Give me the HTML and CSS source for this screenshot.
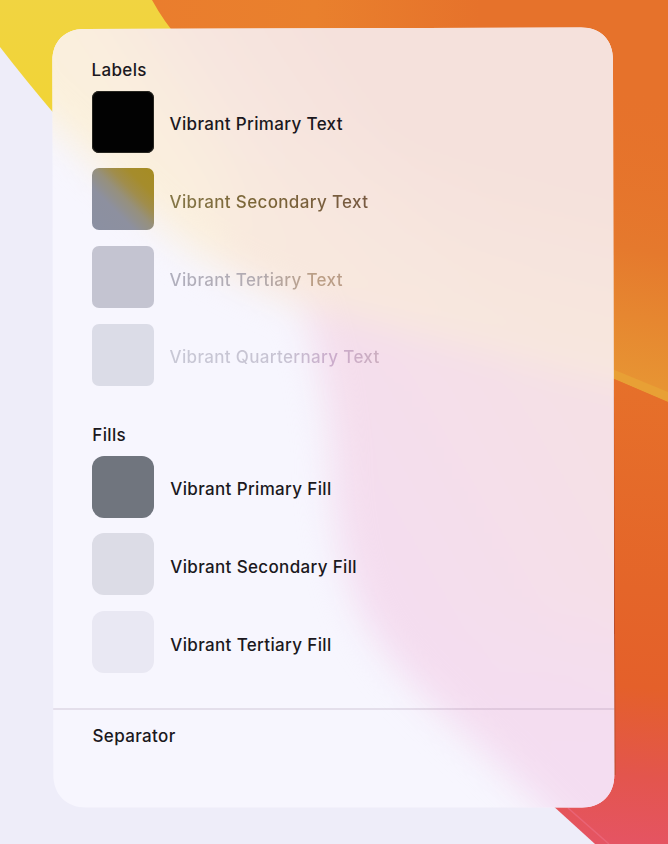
FILE: index.html
```html
<!DOCTYPE html>
<html lang="en">
<head>
<meta charset="utf-8">
<title>Vibrancy</title>
<link rel="stylesheet" href="styles.css">
</head>
<body>
<svg class="wallpaper" viewBox="0 0 668 844" aria-hidden="true">
  <defs>
    <linearGradient id="yellow" x1="0" y1="0" x2="0" y2="110" gradientUnits="userSpaceOnUse">
      <stop offset="0" stop-color="#f1d441"/><stop offset="1" stop-color="#f1d436"/>
    </linearGradient>
    <linearGradient id="orange" x1="150" y1="0" x2="480" y2="0" gradientUnits="userSpaceOnUse">
      <stop offset="0" stop-color="#ea7d2d"/><stop offset=".5" stop-color="#e9802d"/><stop offset="1" stop-color="#e6722b"/>
    </linearGradient>
    <linearGradient id="side" x1="668" y1="90" x2="615" y2="380" gradientUnits="userSpaceOnUse">
      <stop offset="0" stop-color="#e6722b" stop-opacity="0"/><stop offset=".55" stop-color="#e5792d"/><stop offset="1" stop-color="#e79433"/>
    </linearGradient>
    <linearGradient id="red" x1="650" y1="380" x2="610" y2="844" gradientUnits="userSpaceOnUse">
      <stop offset="0" stop-color="#e6702a"/><stop offset=".45" stop-color="#e46529"/><stop offset=".66" stop-color="#e4602a"/><stop offset=".85" stop-color="#e3554d"/><stop offset="1" stop-color="#e55463"/>
    </linearGradient>
  </defs>
  <rect width="668" height="844" fill="#eeedf9"/>
  <path d="M0 0H260V200H130Q50 112 0 47Z" fill="url(#yellow)"/>
  <path d="M152 0H668V420L400 300L180 40Q164 22 152 0Z" fill="url(#orange)"/>
  <path d="M600 40H668V402L600 372Z" fill="url(#side)"/>
  <path d="M600 364L668 392V402L600 373Z" fill="#e8a035"/>
  <path d="M600 373L668 402V844H595L540 794Z" fill="url(#red)"/>
  <path d="M568 808L609 844" stroke="#ea6476" stroke-width="1.5" fill="none"/>
  <path d="M613.4 390L615 775" stroke="#b84e2e" stroke-width="1.2" fill="none"/>
</svg>

<main class="panel">
  <svg class="glow" viewBox="52 27 563 781" preserveAspectRatio="none" aria-hidden="true">
    <defs>
      <filter id="soft" x="-20%" y="-20%" width="140%" height="140%" color-interpolation-filters="sRGB"><feGaussianBlur stdDeviation="17"/></filter>
      <linearGradient id="warm" x1="120" y1="230" x2="360" y2="70" gradientUnits="userSpaceOnUse">
        <stop offset="0" stop-color="#fbf1db"/><stop offset=".3" stop-color="#faeede"/><stop offset=".6" stop-color="#f7e6df"/><stop offset="1" stop-color="#f5e1dc"/>
      </linearGradient>
      <linearGradient id="warmEdge" x1="470" y1="150" x2="420" y2="340" gradientUnits="userSpaceOnUse">
        <stop offset="0" stop-color="#f8e8de" stop-opacity="0"/><stop offset="1" stop-color="#f8e8de"/>
      </linearGradient>
      <linearGradient id="lilac" x1="320" y1="620" x2="600" y2="460" gradientUnits="userSpaceOnUse">
        <stop offset="0" stop-color="#f4dcf2"/><stop offset="1" stop-color="#f5e0e6"/>
      </linearGradient>
      <linearGradient id="lilacFoot" x1="500" y1="600" x2="520" y2="760" gradientUnits="userSpaceOnUse">
        <stop offset="0" stop-color="#f4ddf1" stop-opacity="0"/><stop offset="1" stop-color="#f4ddf1"/>
      </linearGradient>
    </defs>
    <rect x="52" y="27" width="563" height="781" fill="#f7f6fe"/>
    <g filter="url(#soft)">
      <path d="M0 -20H700V420L310 308Q215 275 160 225Q95 165 20 95Z" fill="url(#warm)"/>
      <path d="M230 120H700V420L310 308L230 270Z" fill="url(#warmEdge)"/>
      <path d="M302 304L700 404V900H630Q540 800 455 725Q370 650 352 590Q332 530 332 455Q325 370 302 304Z" fill="url(#lilac)"/>
      <path d="M400 600H700V900H630Q540 800 455 725Q420 690 400 660Z" fill="url(#lilacFoot)"/>
    </g>
  </svg>

  <section class="group labels">
    <h2>Labels</h2>
    <ul>
      <li><i class="swatch label-1"></i><span class="name">Vibrant Primary Text</span></li>
      <li><i class="swatch label-2"></i><span class="name tint secondary">Vibrant Secondary Text</span></li>
      <li><i class="swatch label-3"></i><span class="name tint tertiary">Vibrant Tertiary Text</span></li>
      <li><i class="swatch label-4"></i><span class="name tint quarternary">Vibrant Quarternary Text</span></li>
    </ul>
  </section>

  <section class="group fills">
    <h2>Fills</h2>
    <ul>
      <li><i class="swatch fill-1"></i><span class="name">Vibrant Primary Fill</span></li>
      <li><i class="swatch fill-2"></i><span class="name">Vibrant Secondary Fill</span></li>
      <li><i class="swatch fill-3"></i><span class="name">Vibrant Tertiary Fill</span></li>
    </ul>
  </section>

  <hr>
  <section class="group footer"><h2>Separator</h2></section>
</main>
</body>
</html>
```
FILE: styles.css
```css
* { box-sizing: border-box; }

body {
  margin: 0;
  height: 844px;
  overflow: hidden;
  padding: 27px 53px 36px 52px;
  font-family: Inter, "Liberation Sans", sans-serif;
  font-size: 17px;
  font-weight: 500;
  letter-spacing: 0.35px;
  line-height: 20px;
  color: #1b1820;
}

.wallpaper {
  position: absolute;
  inset: 0;
  width: 668px;
  height: 844px;
  z-index: -1;
}

.panel {
  position: relative;
  width: 563px;
  height: 781px;
  clip-path: path("M32 2 L529 0.5 C549 0.5 561 13 561 33 L562.3 748 C562.3 768 549 780.5 530 780.5 L34 780.5 C14 780.5 1.4 767 1.3 748 L0.4 34 C0.4 14 13 2.2 32 2 Z");
}

.glow {
  position: absolute;
  inset: 0;
  width: 100%;
  height: 100%;
  z-index: -1;
}

.group { padding-left: 39.5px; }
.labels { padding-top: 32.7px; }
.fills { padding: 38.8px 0 0 40.3px; }
.footer { padding: 16px 0 0 40.5px; }

h2 {
  margin: 0;
  font-size: inherit;
  font-weight: inherit;
}

ul {
  display: grid;
  gap: 16px;
  margin: 0;
  padding: 11px 0 0;
  list-style: none;
}

li {
  display: flex;
  align-items: center;
  gap: 16px;
  height: 61.8px;
}

.swatch {
  width: 62px;
  height: 62px;
  border-radius: 7px;
}

.fills .swatch { border-radius: 12px; }

.name {
  white-space: nowrap;
  padding-top: 5px;
}

.label-1 { background: #020202; box-shadow: inset 0 0 0 1px #26251f; }
.label-2 { background: linear-gradient(45deg, #8b90a2 0%, #8d909f 34%, #96907c 52%, #a08d4c 64%, #a58c2c 78%, #a68c22 100%); }
.label-3 { background: #c4c4d1; }
.label-4 { background: #dbdce7; }
.fill-1 { background: #70757e; }
.fill-2 { background: #dcdce6; }
.fill-3 { background: #e9e8f3; }

.tint {
  color: transparent;
  background-clip: text;
  -webkit-background-clip: text;
}

.secondary { background-image: linear-gradient(90deg, #857748, #7a6436 45%, #785a42); }
.tertiary { background-image: linear-gradient(90deg, #b0afbd, #b2abb1 50%, #bb9e84 85%, #b99c88); }
.quarternary { background-image: linear-gradient(90deg, #c8c8d5, #c7c3d2 55%, #cbabcb 78%, #cbaebf); }

hr {
  height: 2px;
  margin: 35px 0 0;
  border: 0;
  background: rgba(90, 60, 100, 0.12);
}
```
